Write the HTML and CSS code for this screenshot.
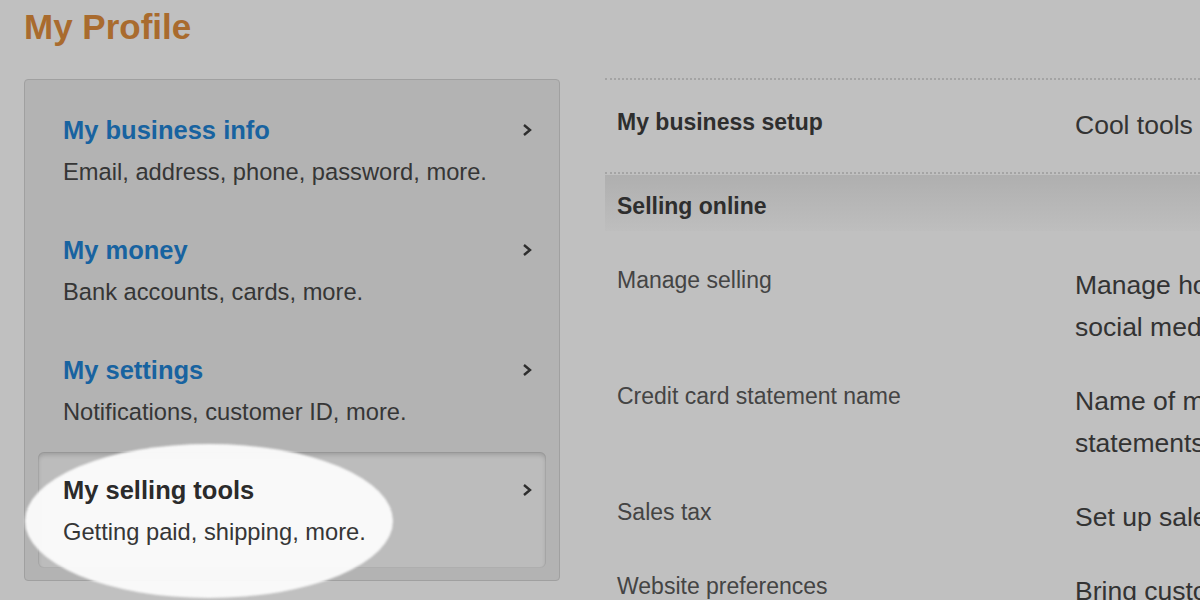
FILE: index.html
```html
<!DOCTYPE html>
<html lang="en">
<head>
    <meta charset="UTF-8">
    <title>My Profile</title>
    <link rel="stylesheet" href="styles.css">
</head>
<body>

    <h1 class="page-title">My Profile</h1>

    <div class="main">
        <!-- Linke Navigation -->
        <div class="nav-panel">
            <a class="nav-item" href="#">
                <div class="nav-text">
                    <div class="nav-title">My business info</div>
                    <div class="nav-sub">Email, address, phone, password, more.</div>
                </div>
                <svg class="chevron" width="10" height="14" viewBox="0 0 10 14"><polyline points="2,2 8,7 2,12" fill="none" stroke="#2e2e2e" stroke-width="2.4"/></svg>
            </a>
            <a class="nav-item" href="#">
                <div class="nav-text">
                    <div class="nav-title">My money</div>
                    <div class="nav-sub">Bank accounts, cards, more.</div>
                </div>
                <svg class="chevron" width="10" height="14" viewBox="0 0 10 14"><polyline points="2,2 8,7 2,12" fill="none" stroke="#2e2e2e" stroke-width="2.4"/></svg>
            </a>
            <a class="nav-item" href="#">
                <div class="nav-text">
                    <div class="nav-title">My settings</div>
                    <div class="nav-sub">Notifications, customer ID, more.</div>
                </div>
                <svg class="chevron" width="10" height="14" viewBox="0 0 10 14"><polyline points="2,2 8,7 2,12" fill="none" stroke="#2e2e2e" stroke-width="2.4"/></svg>
            </a>
            <a class="nav-item active" href="#">
                <div class="nav-text">
                    <div class="nav-title">My selling tools</div>
                    <div class="nav-sub">Getting paid, shipping, more.</div>
                </div>
                <svg class="chevron" width="10" height="14" viewBox="0 0 10 14"><polyline points="2,2 8,7 2,12" fill="none" stroke="#2e2e2e" stroke-width="2.4"/></svg>
            </a>
        </div>

        <!-- Inhalt rechts -->
        <div class="content">
            <div class="setup-row">
                <div class="setup-label">My business setup</div>
                <div class="setup-value">Cool tools to help you run and grow your business.</div>
            </div>

            <div class="section-head">Selling online</div>

            <div class="rows">
                <div class="row">
                    <div class="row-label">Manage selling</div>
                    <div class="row-desc">Manage how you sell on your website and<br>social media.</div>
                </div>
                <div class="row">
                    <div class="row-label">Credit card statement name</div>
                    <div class="row-desc">Name of my business on customer credit card<br>statements.</div>
                </div>
                <div class="row">
                    <div class="row-label">Sales tax</div>
                    <div class="row-desc">Set up sales tax rates for your items.</div>
                </div>
                <div class="row">
                    <div class="row-label">Website preferences</div>
                    <div class="row-desc">Bring customers to your website.</div>
                </div>
            </div>
        </div>
    </div>

</body>
</html>
```

FILE: styles.css
```css
body {
    margin: 0;
    background-color: #c0c0c0;
    font-family: "Liberation Sans", Arial, sans-serif;
    overflow: hidden;
    height: 600px;
}

.page-title {
    margin: 7px 0 0 24px;
    font-size: 35px;
    line-height: 40px;
    font-weight: bold;
    color: #a96b2e;
}

.main {
    display: flex;
    align-items: flex-start;
    margin-top: 31px;
    padding-left: 24px;
    gap: 45px;
}

/* Navigation links */
.nav-panel {
    flex: 0 0 auto;
    width: 508px;
    margin-top: 1px;
    padding: 12px 13px;
    background-color: #b3b3b3;
    border: 1px solid #a0a0a0;
    border-radius: 4px;
    display: flex;
    flex-direction: column;
    gap: 4px;
}

.nav-item {
    display: flex;
    justify-content: space-between;
    height: 116px;
    box-sizing: border-box;
    padding: 23px 14px 0 25px;
    text-decoration: none;
    border-radius: 6px;
    position: relative;
}

.nav-title {
    font-size: 25.5px;
    line-height: 30px;
    font-weight: bold;
    color: #1863a0;
}

.nav-sub {
    margin-top: 12px;
    font-size: 23.7px;
    line-height: 30px;
    color: #363636;
}

.chevron {
    margin-top: 8px;
}

/* Aktiver Eintrag mit Spotlight */
.nav-item.active {
    background-color: #bcbcbc;
    box-shadow: inset 0 3px 4px rgba(0, 0, 0, 0.16), inset 0 0 0 1px rgba(0, 0, 0, 0.06);
    z-index: 0;
}

.nav-item.active::before {
    content: "";
    position: absolute;
    left: -13px;
    top: -8px;
    width: 368px;
    height: 154px;
    border-radius: 50%;
    background-color: rgba(251, 251, 251, 0.96);
    filter: blur(0.8px);
    z-index: 0;
}

.nav-item.active .nav-text,
.nav-item.active .chevron {
    position: relative;
    z-index: 1;
}

.nav-item.active .nav-title {
    color: #2b2b2b;
}

/* Inhalt rechts */
.content {
    flex: 1;
    min-width: 0;
    overflow: hidden;
    white-space: nowrap;
}

.setup-row {
    display: grid;
    grid-template-columns: 470px 1fr;
    padding: 24px 0 26px;
    border-top: 2px dotted #a4a4a4;
    border-bottom: 2px dotted #a4a4a4;
}

.setup-label {
    padding-left: 12px;
    font-size: 23px;
    line-height: 36px;
    font-weight: bold;
    color: #2e2e2e;
}

.setup-value {
    font-size: 26.5px;
    line-height: 42px;
    color: #333;
}

.section-head {
    margin-top: 1px;
    height: 56px;
    box-sizing: border-box;
    padding: 16px 12px 0;
    font-size: 23px;
    line-height: 30px;
    font-weight: bold;
    color: #2e2e2e;
    background: linear-gradient(to bottom, #afafaf, #bebebe);
}

.rows {
    padding-top: 17px;
}

.row {
    display: grid;
    grid-template-columns: 470px 1fr;
    padding: 16px 0;
}

.row-label {
    padding-left: 12px;
    font-size: 23px;
    line-height: 32px;
    color: #444;
}

.row-desc {
    font-size: 26.5px;
    line-height: 42px;
    color: #333;
}
```
